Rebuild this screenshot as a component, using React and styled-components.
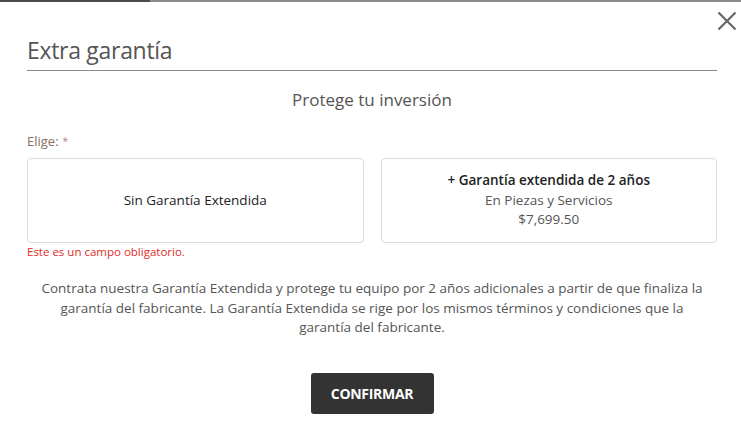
import React from "react";
import styled, { createGlobalStyle } from "styled-components";

const Global = createGlobalStyle`
  html, body { margin: 0; padding: 0; background: #fff; }
  body { font-family: "Open Sans", "Liberation Sans", sans-serif; }
  * { box-sizing: border-box; }
`;

const Page = styled.div`
  width: 741px;
  height: 429px;
  background: #fff;
  position: relative;
  overflow: hidden;
`;

const TopStrip = styled.div`
  height: 2px;
  display: flex;
  background: #8c8c8c;
`;

const StripDark = styled.div`
  width: 150px;
  background: #4a4a4a;
`;

const Close = styled.button`
  position: absolute;
  top: 10px;
  right: 3px;
  width: 22px;
  height: 22px;
  padding: 0;
  border: 0;
  background: none;
  cursor: pointer;
`;

const Modal = styled.div`
  padding: 32px 24px 0 27px;
  display: flex;
  flex-direction: column;
`;

const Header = styled.header`
  border-bottom: 1px solid #8a8a8a;
  padding-bottom: 4px;
`;

const Title = styled.h1`
  margin: 0;
  font-size: 23px;
  font-weight: 400;
  color: #555;
  line-height: 32px;
  letter-spacing: -0.3px;
`;

const Subtitle = styled.h2`
  margin: 18px 0 0;
  text-align: center;
  font-size: 17px;
  font-weight: 400;
  color: #555;
  line-height: 22px;
`;

const Label = styled.div`
  margin-top: 21px;
  font-size: 13px;
  color: #8b6d5f;
  line-height: 18px;
`;

const Star = styled.span`
  color: #b08080;
  font-size: 10px;
  vertical-align: top;
  margin-left: 4px;
`;

const Options = styled.div`
  margin-top: 8px;
  display: grid;
  grid-template-columns: 1fr 1fr;
  column-gap: 17px;
`;

const OptionCol = styled.div`
  display: flex;
  flex-direction: column;
`;

const Card = styled.div`
  height: 85px;
  border: 1px solid #dcdcdc;
  border-radius: 4px;
  display: flex;
  flex-direction: column;
  align-items: center;
  justify-content: center;
  text-align: center;
  font-size: 13.5px;
  line-height: 19.5px;
  color: #333;
`;

const CardTitle = styled.div`
  color: #222;
  font-weight: ${(p) => (p.$bold ? 600 : 500)};
`;

const CardLine = styled.div`
  color: #555;
`;

const Error = styled.div`
  margin-top: 1px;
  font-size: 11.5px;
  color: #e02b27;
  line-height: 15px;
`;

const Description = styled.p`
  margin: 20px 0 0;
  padding: 0 9px;
  text-align: center;
  font-size: 13.5px;
  line-height: 19.5px;
  color: #555;
`;

const Actions = styled.div`
  margin-top: 35px;
  display: flex;
  justify-content: center;
`;

const Button = styled.button`
  width: 123px;
  height: 41px;
  border: 0;
  border-radius: 3px;
  background: #333;
  color: #fff;
  font-family: "Open Sans", "Liberation Sans", sans-serif;
  font-weight: 700;
  font-size: 14px;
  letter-spacing: -0.3px;
  cursor: pointer;
`;

export default function App() {
  return (
    <Page>
      <Global />
      <TopStrip>
        <StripDark />
      </TopStrip>
      <Close aria-label="Cerrar">
        <svg width="22" height="22" viewBox="0 0 22 22">
          <path d="M2.5 2.5 L19.5 19.5 M19.5 2.5 L2.5 19.5" stroke="#666" strokeWidth="2.2" fill="none" />
        </svg>
      </Close>
      <Modal>
        <Header>
          <Title>Extra garantía</Title>
        </Header>
        <Subtitle>Protege tu inversión</Subtitle>
        <Label>
          Elige:<Star>*</Star>
        </Label>
        <Options>
          <OptionCol>
            <Card>
              <CardTitle>Sin Garantía Extendida</CardTitle>
            </Card>
            <Error>Este es un campo obligatorio.</Error>
          </OptionCol>
          <OptionCol>
            <Card>
              <CardTitle $bold>+ Garantía extendida de 2 años</CardTitle>
              <CardLine>En Piezas y Servicios</CardLine>
              <CardLine>$7,699.50</CardLine>
            </Card>
          </OptionCol>
        </Options>
        <Description>
          Contrata nuestra Garantía Extendida y protege tu equipo por 2 años adicionales a partir de que finaliza la
          garantía del fabricante. La Garantía Extendida se rige por los mismos términos y condiciones que la
          garantía del fabricante.
        </Description>
        <Actions>
          <Button>CONFIRMAR</Button>
        </Actions>
      </Modal>
    </Page>
  );
}
